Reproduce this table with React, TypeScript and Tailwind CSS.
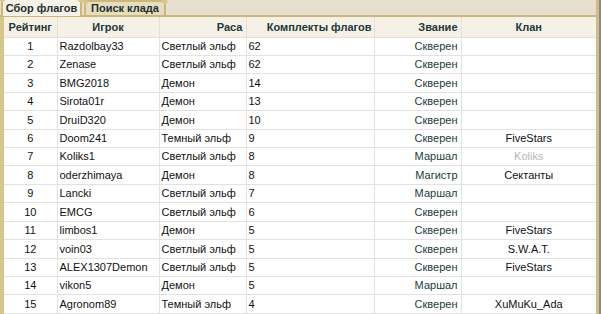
const rows: [number, string, string, string, string, string, boolean?][] = [
  [1, "Razdolbay33", "Светлый эльф", "62", "Скверен", ""],
  [2, "Zenase", "Светлый эльф", "62", "Скверен", ""],
  [3, "BMG2018", "Демон", "14", "Скверен", ""],
  [4, "Sirota01r", "Демон", "13", "Скверен", ""],
  [5, "DruiD320", "Демон", "10", "Скверен", ""],
  [6, "Doom241", "Темный эльф", "9", "Скверен", "FiveStars"],
  [7, "Koliks1", "Светлый эльф", "8", "Маршал", "Koliks", true],
  [8, "oderzhimaya", "Демон", "8", "Магистр", "Сектанты"],
  [9, "Lancki", "Светлый эльф", "7", "Маршал", ""],
  [10, "EMCG", "Светлый эльф", "6", "Скверен", ""],
  [11, "limbos1", "Демон", "5", "Скверен", "FiveStars"],
  [12, "voin03", "Светлый эльф", "5", "Скверен", "S.W.A.T."],
  [13, "ALEX1307Demon", "Светлый эльф", "5", "Скверен", "FiveStars"],
  [14, "vikon5", "Демон", "5", "Маршал", ""],
  [15, "Agronom89", "Темный эльф", "4", "Скверен", "XuMuKu_Ada"],
];

function Tab({ label, active }: { label: string; active?: boolean }) {
  return (
    <div
      className={
        active
          ? "relative h-[18px] w-[81px] mb-[-1px] border-x-2 border-t-2 border-[#cbb877] bg-[#f6f2e7] flex items-center justify-center font-bold text-[#1d3030]"
          : "relative mt-[2px] h-[15px] w-[82px] border-x-2 border-t-2 border-[#cbb877] bg-[#e6dcbf] flex items-center justify-center font-bold text-[#1d3030]"
      }
    >
      <span className="absolute -top-[3px] -left-[3px] h-[5px] w-[5px] rotate-45 bg-[#d8c68a]" />
      <span className="absolute -top-[3px] -right-[3px] h-[5px] w-[5px] rotate-45 bg-[#d8c68a]" />
      {label}
    </div>
  );
}

export default function App() {
  return (
    <div
      className="w-[601px] h-[314px] overflow-hidden bg-[#e7e0d1] flex text-[11px]"
      style={{ fontFamily: '"Liberation Sans", Arial, sans-serif' }}
    >
      <div className="flex-1 flex flex-col">
        <div className="h-[17px] flex items-end gap-[2px] pl-[1px] border-b-2 border-[#cbb877]">
          <Tab label="Сбор флагов" active />
          <Tab label="Поиск клада" />
        </div>
        <div className="flex-1 flex border-l-[4px] border-[#d6c58d] bg-white">
          <table className="w-[592px] table-fixed border-collapse">
            <colgroup>
              <col className="w-[53px]" />
              <col className="w-[102px]" />
              <col className="w-[87px]" />
              <col className="w-[128px]" />
              <col className="w-[87px]" />
              <col />
            </colgroup>
            <thead>
              <tr className="h-[20px] bg-[#f5f1e6] font-bold text-[#213838]">
                <th className="border border-[#e4e0d6] border-t-0 border-l-0 text-center">Рейтинг</th>
                <th className="border border-[#e4e0d6] border-t-0 text-center">Игрок</th>
                <th className="border border-[#e4e0d6] border-t-0 text-right pr-[3px]">Раса</th>
                <th className="border border-[#e4e0d6] border-t-0 text-right pr-[2px]">Комплекты флагов</th>
                <th className="border border-[#e4e0d6] border-t-0 text-right pr-[3px]">Звание</th>
                <th className="border border-[#e4e0d6] border-t-0 border-r-0 text-center">Клан</th>
              </tr>
            </thead>
            <tbody className="text-[#111]">
              {rows.map(([n, name, race, flags, rank, clan, faded]) => (
                <tr key={n} className="h-[18.2px]">
                  <td className="border border-[#e2e2e2] border-l-0 text-center">{n}</td>
                  <td className="border border-[#e2e2e2] pl-[2px] whitespace-nowrap">{name}</td>
                  <td className="border border-[#e2e2e2] pl-[2px] whitespace-nowrap">{race}</td>
                  <td className="border border-[#e2e2e2] pl-[2px]">{flags}</td>
                  <td className="border border-[#e2e2e2] pr-[3px] text-right text-[#1e3b3b]">{rank}</td>
                  <td
                    className={`border border-[#e2e2e2] border-r-0 text-center ${faded ? "text-[#b8b8b8]" : ""}`}
                  >
                    {clan}
                  </td>
                </tr>
              ))}
            </tbody>
          </table>
        </div>
      </div>
      <div className="w-[3px] bg-[#cfbd83]" />
      <div className="w-[2px] bg-[#8d8b84]" />
    </div>
  );
}
